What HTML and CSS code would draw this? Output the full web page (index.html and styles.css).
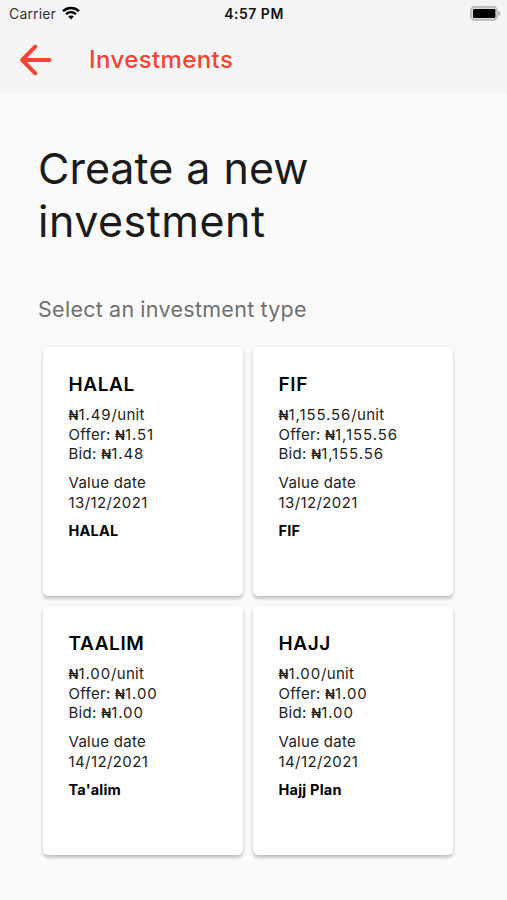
FILE: index.html
```html
<!DOCTYPE html>
<html lang="en">
<head>
<meta charset="utf-8">
<title>Investments</title>
<link rel="stylesheet" href="styles.css">
</head>
<body>
<header class="top">
  <div class="status">
    <div class="carrier"><span class="carrier-name">Carrier</span>
      <svg class="wifi" viewBox="0 0 18 14" width="18" height="14" fill="none" stroke="#000" stroke-width="2.4"><path d="M1 5.1C5.5.9 12.5.9 17 5.1"/><path d="M4 8.2c2.9-2.6 7.1-2.6 10 0"/><path d="M6.2 10.6c1.6-1.5 4-1.5 5.6 0L9 13.4z" fill="#000" stroke="none"/></svg>
    </div>
    <time class="clock">4:57 PM</time>
    <svg class="battery" viewBox="0 0 31 15" width="31" height="15"><rect x=".9" y=".9" width="26.2" height="13" rx="3.6" fill="#dcdcdc" stroke="#b8b8b8" stroke-width="1.6"/><rect x="3" y="3" width="22.4" height="9" rx="1.2" fill="#000"/><path d="M28.400 5c1.200.4 2 1.200 2 2.400s-.8 2-2 2.400z" fill="#aaa"/></svg>
  </div>
  <nav class="bar">
    <svg class="back" viewBox="0 0 34 34" width="34" height="34" fill="none" stroke="#f44336" stroke-width="4" stroke-linecap="round" stroke-linejoin="round"><path d="M16.300 3.700 3.200 17l13.100 13.300M3.200 17h27.300"/></svg>
    <span class="bar-title">Investments</span>
  </nav>
</header>
<main class="content">
  <h1 class="heading"><span class="heading-lead">Create a new</span><br>investment</h1>
  <p class="prompt">Select an investment type</p>
  <section class="cards">
    <article class="card">
      <h2 class="name">HALAL</h2>
      <p class="lines"><span class="naira">₦</span><span class="num">1.49</span>/unit<br>Offer: <span class="naira">₦</span><span class="num">1.51</span><br>Bid: <span class="naira">₦</span><span class="num">1.48</span></p>
      <p class="lines">Value date<br><span class="date">13/12/2021</span></p>
      <p class="plan">HALAL</p>
    </article>
    <article class="card">
      <h2 class="name">FIF</h2>
      <p class="lines"><span class="naira">₦</span><span class="num">1,155.56</span>/unit<br>Offer: <span class="naira">₦</span><span class="num">1,155.56</span><br>Bid: <span class="naira">₦</span><span class="num">1,155.56</span></p>
      <p class="lines">Value date<br><span class="date">13/12/2021</span></p>
      <p class="plan">FIF</p>
    </article>
    <article class="card">
      <h2 class="name">TAALIM</h2>
      <p class="lines"><span class="naira">₦</span><span class="num">1.00</span>/unit<br>Offer: <span class="naira">₦</span><span class="num">1.00</span><br>Bid: <span class="naira">₦</span><span class="num">1.00</span></p>
      <p class="lines">Value date<br><span class="date">14/12/2021</span></p>
      <p class="plan">Ta'alim</p>
    </article>
    <article class="card">
      <h2 class="name">HAJJ</h2>
      <p class="lines"><span class="naira">₦</span><span class="num">1.00</span>/unit<br>Offer: <span class="naira">₦</span><span class="num">1.00</span><br>Bid: <span class="naira">₦</span><span class="num">1.00</span></p>
      <p class="lines">Value date<br><span class="date">14/12/2021</span></p>
      <p class="plan">Hajj Plan</p>
    </article>
  </section>
</main>
</body>
</html>
```
FILE: styles.css
```css
* { box-sizing: border-box; margin: 0; padding: 0; }
body { height: 900px; overflow: hidden; background: #fafafa; color: #1b1b1b; font-family: Inter, sans-serif; }
svg { display: block; flex: none; }
.top { height: 93px; background: #f5f5f5; }
.status { height: 27px; display: grid; grid-template-columns: 1fr auto 1fr; align-items: center; padding: 0 6px 0 9px; }
.carrier { display: flex; align-items: center; gap: 6px; font-size: 14px; letter-spacing: .15px; color: #333; }
.wifi { margin-top: -2px; }
.clock { font-size: 14px; font-weight: 600; letter-spacing: .5px; margin-right: 2px; color: #111; }
.battery { justify-self: end; margin-top: -1px; }
.bar { height: 65px; display: flex; align-items: center; gap: 36px; padding-left: 19px; }
.bar-title { font-size: 24px; font-weight: 500; letter-spacing: .4px; color: #f44336; }
.content { padding: 49px 38px 0; }
.heading { font-size: 43px; line-height: 52.500px; font-weight: 400; letter-spacing: .5px; }
.heading-lead { letter-spacing: 0; word-spacing: 1px; }
.prompt { margin-top: 48px; font-size: 21.500px; line-height: 28px; letter-spacing: .3px; word-spacing: -.5px; color: #707070; }
.cards { display: grid; grid-template-columns: 200px 200px; grid-auto-rows: 249px; gap: 10px; margin: 24px 0 0 4.500px; }
.card { background: #fff; border-radius: 5px; padding: 25px 26px; box-shadow: 0 3px 3px rgba(0,0,0,.16), 0 1px 5px rgba(0,0,0,.1); color: #222; }
.name { font-size: 19px; line-height: 26px; font-weight: 600; letter-spacing: .6px; color: #000; margin-bottom: 7px; }
.lines { font-size: 15px; line-height: 19.600px; letter-spacing: .3px; margin-bottom: 9.500px; white-space: nowrap; }
.naira { display: inline-block; width: 10px; font-size: 13px; font-weight: 600; line-height: 1; }
.num { letter-spacing: .9px; }
.date { letter-spacing: .4px; }
.plan { font-size: 14.500px; line-height: 18px; font-weight: 700; letter-spacing: .2px; color: #000; }
```
